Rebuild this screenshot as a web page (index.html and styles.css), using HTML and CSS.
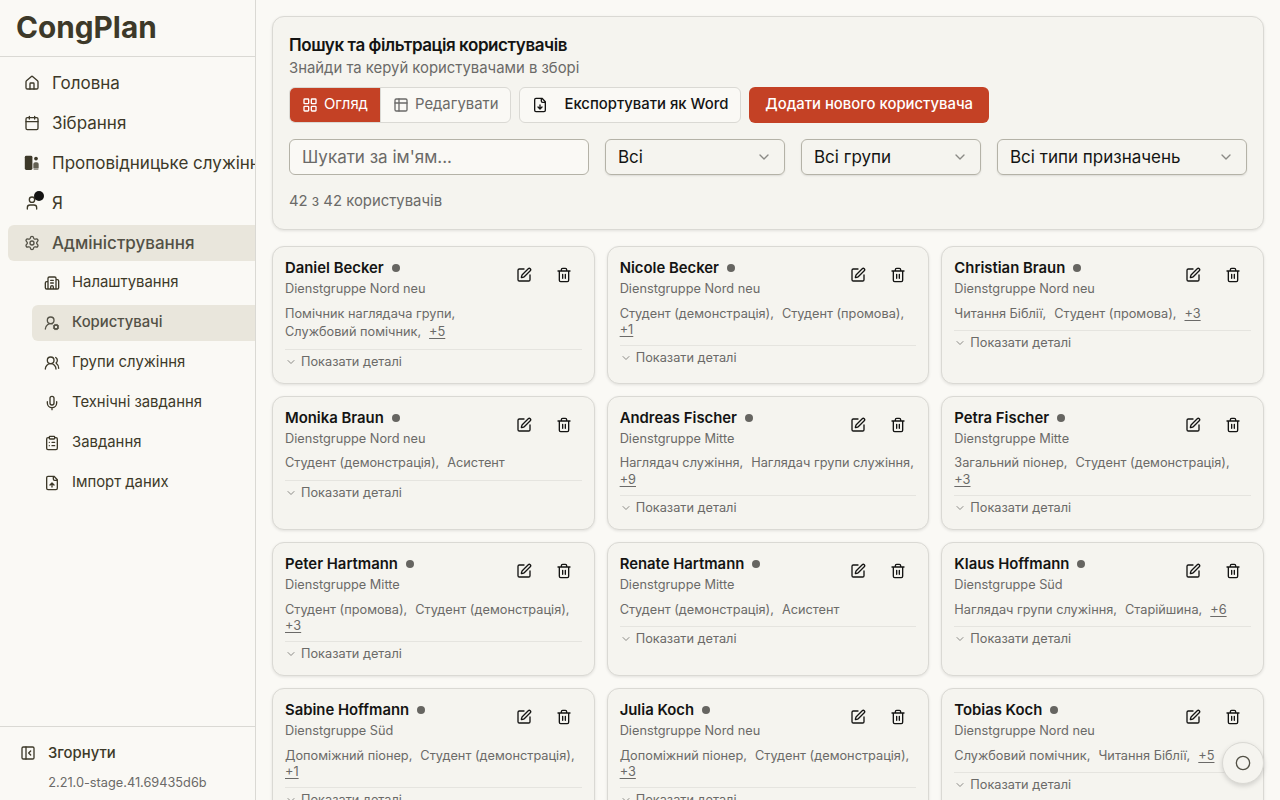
FILE: index.html
```html
<!DOCTYPE html>
<html lang="uk">
<head>
<meta charset="utf-8">
<title>CongPlan</title>
<link rel="stylesheet" href="styles.css">
</head>
<body>
<svg class="sprite" aria-hidden="true">
  <symbol id="house" viewBox="0 0 24 24"><path d="M15 21v-8a1 1 0 0 0-1-1h-4a1 1 0 0 0-1 1v8"/><path d="M3 10a2 2 0 0 1 .709-1.528l7-6a2 2 0 0 1 2.582 0l7 6A2 2 0 0 1 21 10v9a2 2 0 0 1-2 2H5a2 2 0 0 1-2-2z"/></symbol>
  <symbol id="calendar" viewBox="0 0 24 24"><path d="M8 2v4M16 2v4M3 10h18"/><rect x="3" y="4" width="18" height="18" rx="2"/></symbol>
  <symbol id="ministry" viewBox="0 0 24 24"><rect x="1.2" y="1.2" width="11.4" height="21.300" rx="2.200" fill="currentColor" stroke="none"/><circle cx="18" cy="5.400" r="2.800" fill="currentColor" stroke="none"/><path d="M14 13.500a2.800 2.800 0 0 1 2.800-2.800h2.400a2.800 2.800 0 0 1 2.800 2.800V20h-8z" fill="currentColor" stroke="none" opacity=".8"/><path d="M14.500 20h7v2.500h-7z" fill="currentColor" stroke="none" opacity=".5"/></symbol>
  <symbol id="user" viewBox="0 0 24 24"><path d="M19 21v-2a4 4 0 0 0-4-4H9a4 4 0 0 0-4 4v2"/><circle cx="12" cy="7" r="4"/></symbol>
  <symbol id="settings" viewBox="0 0 24 24"><path d="M9.671 4.136a2.34 2.34 0 0 1 4.659 0 2.34 2.34 0 0 0 3.319 1.915 2.34 2.34 0 0 1 2.33 4.033 2.34 2.34 0 0 0 0 3.831 2.34 2.34 0 0 1-2.33 4.033 2.34 2.34 0 0 0-3.319 1.915 2.34 2.34 0 0 1-4.659 0 2.34 2.34 0 0 0-3.32-1.915 2.34 2.34 0 0 1-2.33-4.033 2.34 2.34 0 0 0 0-3.831A2.34 2.34 0 0 1 6.35 6.051a2.34 2.34 0 0 0 3.319-1.915"/><circle cx="12" cy="12" r="3"/></symbol>
  <symbol id="building" viewBox="0 0 24 24"><path d="M10 12h4M10 8h4M14 21v-3a2 2 0 0 0-4 0v3M6 10H4a2 2 0 0 0-2 2v7a2 2 0 0 0 2 2h16a2 2 0 0 0 2-2V9a2 2 0 0 0-2-2h-2M6 21V5a2 2 0 0 1 2-2h8a2 2 0 0 1 2 2v16"/></symbol>
  <symbol id="user-cog" viewBox="0 0 24 24"><path d="m14.305 19.530.923-.382M15.228 16.852l-.923-.383M16.852 15.228l-.383-.923M16.852 20.772l-.383.924M19.148 15.228l.383-.923M19.530 21.696l-.382-.924M20.772 16.852l.924-.383M20.772 19.148l.924.383"/><path d="M2 21a8 8 0 0 1 10.434-7.620"/><circle cx="18" cy="18" r="3"/><circle cx="10" cy="8" r="5"/></symbol>
  <symbol id="users" viewBox="0 0 24 24"><path d="M18 21a8 8 0 0 0-16 0"/><circle cx="10" cy="8" r="5"/><path d="M22 20c0-3.370-2-6.500-4-8a5 5 0 0 0-.450-8.300"/></symbol>
  <symbol id="mic" viewBox="0 0 24 24"><path d="M12 19v3M19 10v2a7 7 0 0 1-14 0v-2"/><rect x="9" y="2" width="6" height="13" rx="3"/></symbol>
  <symbol id="clipboard" viewBox="0 0 24 24"><rect x="8" y="2" width="8" height="4" rx="1"/><path d="M16 4h2a2 2 0 0 1 2 2v14a2 2 0 0 1-2 2H6a2 2 0 0 1-2-2V6a2 2 0 0 1 2-2h2M12 11h4M12 16h4M8 11h.01M8 16h.01"/></symbol>
  <symbol id="file-up" viewBox="0 0 24 24"><path d="M15 2H6a2 2 0 0 0-2 2v16a2 2 0 0 0 2 2h12a2 2 0 0 0 2-2V7ZM14 2v4a2 2 0 0 0 2 2h4M12 12v6M15 15l-3-3-3 3"/></symbol>
  <symbol id="file-down" viewBox="0 0 24 24"><path d="M15 2H6a2 2 0 0 0-2 2v16a2 2 0 0 0 2 2h12a2 2 0 0 0 2-2V7ZM14 2v4a2 2 0 0 0 2 2h4M12 18v-6M9 15l3 3 3-3"/></symbol>
  <symbol id="panel" viewBox="0 0 24 24"><rect x="3" y="3" width="18" height="18" rx="2"/><path d="M9 3v18M16 15l-3-3 3-3"/></symbol>
  <symbol id="grid" viewBox="0 0 24 24"><rect x="3" y="3" width="7" height="7" rx="1"/><rect x="14" y="3" width="7" height="7" rx="1"/><rect x="14" y="14" width="7" height="7" rx="1"/><rect x="3" y="14" width="7" height="7" rx="1"/></symbol>
  <symbol id="table" viewBox="0 0 24 24"><rect x="3" y="3" width="18" height="18" rx="2"/><path d="M3 9h18M9 3v18"/></symbol>
  <symbol id="edit" viewBox="0 0 24 24"><path d="M12 3H5a2 2 0 0 0-2 2v14a2 2 0 0 0 2 2h14a2 2 0 0 0 2-2v-7"/><path d="M18.375 2.625a1 1 0 0 1 3 3l-9.013 9.014a2 2 0 0 1-.853.505l-2.873.840a.5.5 0 0 1-.620-.620l.840-2.873a2 2 0 0 1 .506-.852z"/></symbol>
  <symbol id="trash" viewBox="0 0 24 24"><path d="M10 11v6M14 11v6M19 6v14a2 2 0 0 1-2 2H7a2 2 0 0 1-2-2V6M3 6h18M8 6V4a2 2 0 0 1 2-2h4a2 2 0 0 1 2 2v2"/></symbol>
  <symbol id="chevron" viewBox="0 0 24 24"><path d="m6 9 6 6 6-6"/></symbol>
  <symbol id="circle" viewBox="0 0 24 24"><circle cx="12" cy="12" r="10"/></symbol>
</svg>
<div class="app">
  <aside class="sidebar">
    <header class="brand">CongPlan</header>
    <nav class="nav">
      <a class="item"><svg class="icon"><use href="#house"/></svg><span>Головна</span></a>
      <a class="item"><svg class="icon"><use href="#calendar"/></svg><span>Зібрання</span></a>
      <a class="item"><svg class="icon"><use href="#ministry"/></svg><span>Проповідницьке служіння</span></a>
      <a class="item"><span class="with-badge"><svg class="icon"><use href="#user"/></svg><i class="badge"></i></span><span>Я</span></a>
      <a class="item active"><svg class="icon"><use href="#settings"/></svg><span>Адміністрування</span></a>
      <div class="subnav">
        <a class="item sub"><svg class="icon"><use href="#building"/></svg><span>Налаштування</span></a>
        <a class="item sub active"><svg class="icon"><use href="#user-cog"/></svg><span>Користувачі</span></a>
        <a class="item sub"><svg class="icon"><use href="#users"/></svg><span>Групи служіння</span></a>
        <a class="item sub"><svg class="icon"><use href="#mic"/></svg><span>Технічні завдання</span></a>
        <a class="item sub"><svg class="icon"><use href="#clipboard"/></svg><span>Завдання</span></a>
        <a class="item sub"><svg class="icon"><use href="#file-up"/></svg><span>Імпорт даних</span></a>
      </div>
    </nav>
    <footer class="side-foot">
      <button class="collapse"><svg class="icon"><use href="#panel"/></svg><span>Згорнути</span></button>
      <div class="version">2.21.0-stage.41.69435d6b</div>
    </footer>
  </aside>
  <main class="main">
    <section class="panel">
      <h1 class="panel-title">Пошук та фільтрація користувачів</h1>
      <p class="panel-sub">Знайди та керуй користувачами в зборі</p>
      <div class="toolbar">
        <div class="segmented">
          <button class="seg on"><svg class="icon"><use href="#grid"/></svg><span>Огляд</span></button>
          <button class="seg"><svg class="icon"><use href="#table"/></svg><span>Редагувати</span></button>
        </div>
        <button class="btn outline"><svg class="icon"><use href="#file-down"/></svg><span>Експортувати як Word</span></button>
        <button class="btn primary">Додати нового користувача</button>
      </div>
      <div class="filters">
        <input class="field search" placeholder="Шукати за ім'ям...">
        <div class="field select"><span>Всі</span><svg class="icon"><use href="#chevron"/></svg></div>
        <div class="field select"><span>Всі групи</span><svg class="icon"><use href="#chevron"/></svg></div>
        <div class="field select wide"><span>Всі типи призначень</span><svg class="icon"><use href="#chevron"/></svg></div>
      </div>
      <p class="count">42 з 42 користувачів</p>
    </section>
    <section class="cards" id="cards"></section>
  </main>
</div>
<button class="fab"><svg class="icon"><use href="#circle"/></svg></button>
<script src="script.js"></script>
</body>
</html>
```
FILE: styles.css
```css
* { box-sizing: border-box; }
body {
  margin: 0;
  height: 800px;
  overflow: hidden;
  background: #faf9f5;
  color: #141413;
  font-family: Inter, "Liberation Sans", sans-serif;
  font-size: 17px;
  line-height: 24px;
}
h1, h2, p { margin: 0; }
button, input { font: inherit; color: inherit; margin: 0; border: 0; background: none; padding: 0; }
.sprite { position: absolute; width: 0; height: 0; }
.icon {
  flex: none;
  width: 16px;
  height: 16px;
  fill: none;
  stroke: currentColor;
  stroke-width: 2;
  stroke-linecap: round;
  stroke-linejoin: round;
}
.app { display: flex; height: 800px; }

.sidebar {
  flex: none;
  width: 256px;
  display: flex;
  flex-direction: column;
  overflow: hidden;
  border-right: 1px solid #dad9d4;
  color: #3d3929;
}
.brand {
  height: 57px;
  padding: 9px 16px 0;
  border-bottom: 1px solid #dad9d4;
  font-size: 29.75px;
  line-height: 36px;
  font-weight: 700;
}
.nav { flex: 1; display: flex; flex-direction: column; gap: 4px; padding: 8px 0 0 8px; }
.item {
  display: flex;
  align-items: center;
  gap: 12px;
  height: 36px;
  padding-left: 16px;
  border-radius: 6px 0 0 6px;
  white-space: nowrap;
}
.item.active { background: #e9e6dc; color: #535146; font-weight: 500; }
.subnav { display: flex; flex-direction: column; gap: 4px; padding-left: 24px; }
.item.sub { padding-left: 12px; font-size: 14.875px; }
.item.sub span { padding-bottom: 2px; }
.with-badge { position: relative; display: flex; }
.badge { position: absolute; top: -4px; right: -4px; width: 10px; height: 10px; border-radius: 50%; background: #141413; }
.side-foot { height: 74px; border-top: 1px solid #dad9d4; padding: 14px 20px 0; }
.collapse { display: flex; align-items: center; gap: 12px; font-size: 14.875px; font-weight: 500; }
.version { padding: 9px 0 0 28.2px; font-size: 12.75px; line-height: 18px; color: #6b6a68; }

.main { flex: 1; min-width: 0; padding: 16px; }
.panel, .card {
  background: #f5f4ef;
  border: 1px solid #dad9d4;
  border-radius: 12px;
  box-shadow: 0 1px 3px rgba(0, 0, 0, .1);
}
.panel { height: 214px; padding: 16px; }
.panel-title { font-size: 17px; line-height: 24px; font-weight: 600; letter-spacing: -.425px; }
.panel-sub { font-size: 14.875px; line-height: 22px; color: #6b6a68; }
.toolbar { display: flex; gap: 8px; margin-top: 8px; font-size: 14.875px; line-height: 20px; }
.segmented { display: flex; height: 36px; border: 1px solid #dad9d4; border-radius: 6px; overflow: hidden; background: #faf9f5; }
.seg { display: flex; align-items: center; gap: 6px; padding: 0 12px; color: #6b6a68; }
.seg + .seg { border-left: 1px solid #dad9d4; }
.seg.on { background: #c44125; color: #fff; }
.seg span, .btn { padding-bottom: 2px; }
.btn { display: flex; align-items: center; height: 36px; border-radius: 6px; font-weight: 500; }
.outline { gap: 16px; padding-left: 12px; padding-right: 12px; border: 1px solid #dad9d4; background: #faf9f5; }
.outline .icon { margin-top: 2px; }
.primary { padding-left: 16px; padding-right: 16px; background: #c44125; color: #fff; }
.filters { display: flex; gap: 16px; margin-top: 16px; }
.field { height: 36px; padding: 0 12px; border: 1px solid #b4b2a7; border-radius: 6px; font-size: 17px; }
.search { width: 300px; background: #faf9f5; }
.search::placeholder { color: #6b6a68; opacity: 1; }
.select { display: flex; align-items: center; justify-content: space-between; width: 180px; box-shadow: 0 1px 2px rgba(0, 0, 0, .1); }
.select .icon { color: #8b8a86; }
.wide { width: 250px; }
.count { margin-top: 15px; font-size: 14.875px; line-height: 22px; color: #6b6a68; }

.cards { display: grid; grid-template-columns: repeat(3, 1fr); gap: 12px; margin-top: 16px; }
.card { padding: 12px 12px 12.9px; min-width: 0; }
.card-head { display: flex; justify-content: space-between; height: 38px; }
.name { display: flex; align-items: center; gap: 8px; font-size: 14.875px; line-height: 18px; font-weight: 600; }
.dot { width: 8px; height: 8px; border-radius: 50%; background: #666561; }
.group { margin-top: 3px; font-size: 12.75px; line-height: 18px; color: #6b6a68; }
.actions { display: flex; gap: 24px; padding: 8px 10.1px 0 0; }
.actions .icon { display: block; }
.roles { display: flex; flex-wrap: wrap; align-items: baseline; gap: 0 8px; margin-top: 7.8px; font-size: 12.75px; line-height: 18.5px; color: #6b6a68; }
.more { padding-bottom: 2px; line-height: 13px; text-decoration: underline; text-underline-offset: 2px; }
.details { display: flex; align-items: center; gap: 4px; margin-top: 7px; padding-top: 4px; border-top: 1px solid #e5e4df; font-size: 12.75px; line-height: 16px; color: #6b6a68; }
.details .icon { width: 12px; height: 12px; color: #8b8a86; }

.fab {
  position: absolute;
  left: 1222px;
  top: 742px;
  display: flex;
  align-items: center;
  justify-content: center;
  width: 42px;
  height: 42px;
  border: 1px solid #dad9d4;
  border-radius: 50%;
  background: #f5f4ef;
  color: #535146;
  box-shadow: 0 2px 5px rgba(0, 0, 0, .15);
}
```
FILE: script.js
```js
const users = [
  ["Daniel Becker", "Dienstgruppe Nord neu", ["Помічник наглядача групи", "Службовий помічник"], 5],
  ["Nicole Becker", "Dienstgruppe Nord neu", ["Студент (демонстрація)", "Студент (промова)"], 1],
  ["Christian Braun", "Dienstgruppe Nord neu", ["Читання Біблії", "Студент (промова)"], 3],
  ["Monika Braun", "Dienstgruppe Nord neu", ["Студент (демонстрація)", "Асистент"], 0],
  ["Andreas Fischer", "Dienstgruppe Mitte", ["Наглядач служіння", "Наглядач групи служіння"], 9],
  ["Petra Fischer", "Dienstgruppe Mitte", ["Загальний піонер", "Студент (демонстрація)"], 3],
  ["Peter Hartmann", "Dienstgruppe Mitte", ["Студент (промова)", "Студент (демонстрація)"], 3],
  ["Renate Hartmann", "Dienstgruppe Mitte", ["Студент (демонстрація)", "Асистент"], 0],
  ["Klaus Hoffmann", "Dienstgruppe Süd", ["Наглядач групи служіння", "Старійшина"], 6],
  ["Sabine Hoffmann", "Dienstgruppe Süd", ["Допоміжний піонер", "Студент (демонстрація)"], 1],
  ["Julia Koch", "Dienstgruppe Nord neu", ["Допоміжний піонер", "Студент (демонстрація)"], 3],
  ["Tobias Koch", "Dienstgruppe Nord neu", ["Службовий помічник", "Читання Біблії"], 5]
];

const icon = (id) => `<svg class="icon"><use href="#${id}"/></svg>`;

document.getElementById("cards").innerHTML = users.map(([name, group, roles, more]) => `
  <article class="card">
    <div class="card-head">
      <div>
        <div class="name"><span>${name}</span><i class="dot"></i></div>
        <div class="group">${group}</div>
      </div>
      <div class="actions">${icon("edit")}${icon("trash")}</div>
    </div>
    <div class="roles">
      ${roles.map((r, i) => `<span>${r}${i < roles.length - 1 || more ? "," : ""}</span>`).join("")}
      ${more ? `<button class="more">+${more}</button>` : ""}
    </div>
    <div class="details">${icon("chevron")}<span>Показати деталі</span></div>
  </article>`).join("");
```
